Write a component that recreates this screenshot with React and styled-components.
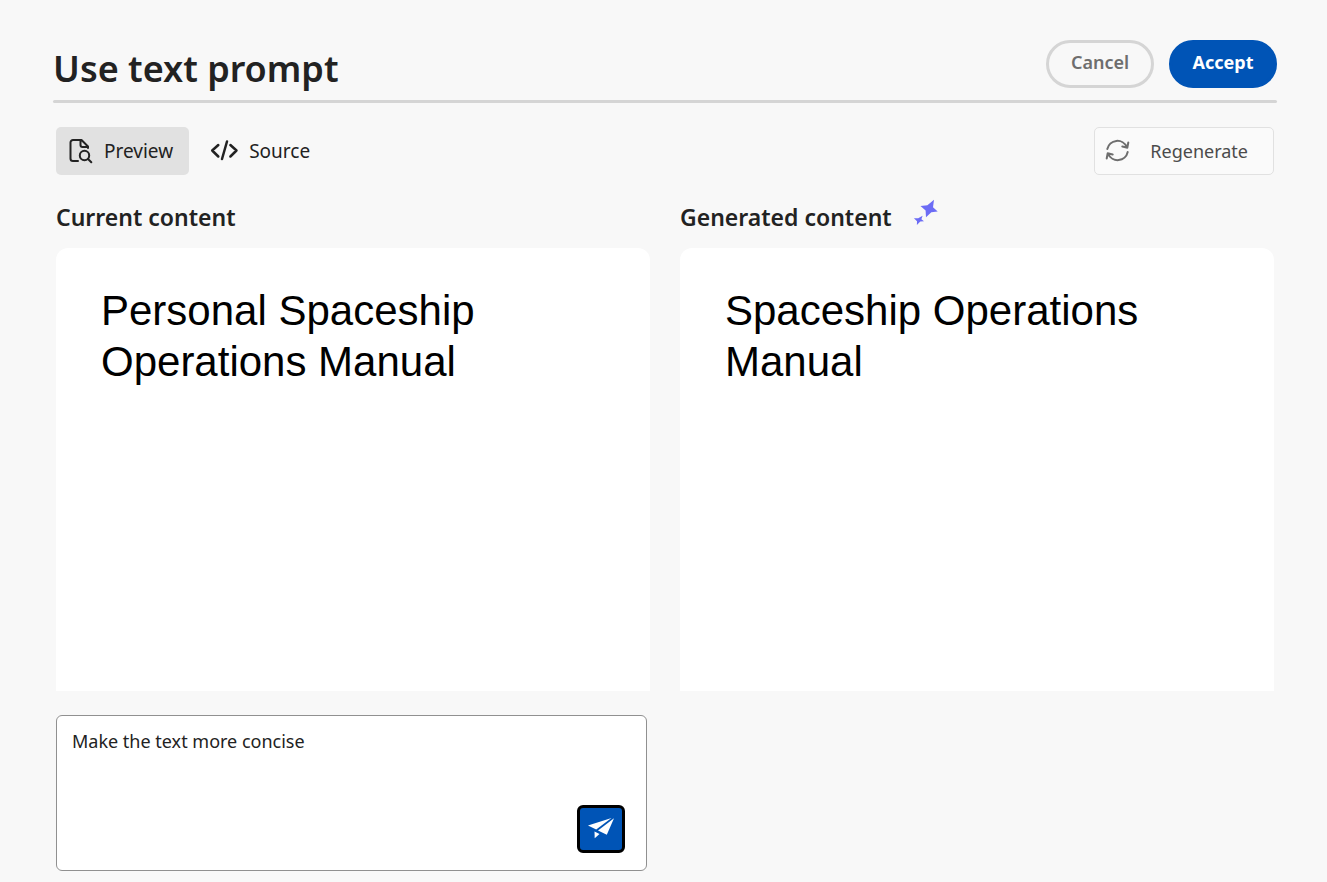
import React, { useState } from "react";
import styled, { createGlobalStyle } from "styled-components";

const GlobalStyle = createGlobalStyle`
  *, *::before, *::after { box-sizing: border-box; }
  body {
    margin: 0;
    background: #f8f8f8;
    color: #222;
    font-family: "Noto Sans", "Open Sans", sans-serif;
  }
  button, textarea { font-family: inherit; }
`;

const Page = styled.main`
  padding: 40px 50px 11px 53px;
`;

const Header = styled.header`
  display: flex;
  justify-content: space-between;
  align-items: flex-start;
  height: 63px;
`;

const Rule = styled.hr`
  height: 3px;
  margin: -3px 0 0;
  border: 0;
  border-radius: 2px;
  background: #d5d5d5;
`;

const Title = styled.h1`
  margin: 0;
  font-size: 36px;
  line-height: 58px;
  font-weight: 600;
`;

const Actions = styled.div`
  display: flex;
  gap: 15px;
`;

const PillButton = styled.button`
  width: 108px;
  height: 48px;
  padding: 0 0 4px;
  border: 3px solid ${(p) => (p.$primary ? "#0054b6" : "#d5d5d5")};
  border-radius: 24px;
  background: ${(p) => (p.$primary ? "#0054b6" : "transparent")};
  color: ${(p) => (p.$primary ? "#fff" : "#6e6e6e")};
  font-size: 18px;
  line-height: 24px;
  font-weight: ${(p) => (p.$primary ? 700 : 600)};
`;

const Body = styled.div`
  padding: 24px 3px 0;
`;

const Toolbar = styled.div`
  display: flex;
  justify-content: space-between;
`;

const ViewSwitch = styled.div`
  display: flex;
  gap: 8px;
`;

const ToolButton = styled.button`
  display: flex;
  align-items: center;
  gap: 10px;
  height: 48px;
  padding: 0 16px 0 12px;
  border: 0;
  border-radius: 5px;
  background: ${(p) => (p.$active ? "#e1e1e1" : "transparent")};
  color: #222;
  font-size: 19px;
  line-height: 24px;
  svg { flex: none; }
`;

const OutlineToolButton = styled(ToolButton)`
  gap: 19px;
  padding: 0 25px 0 8px;
  border: 1px solid #e1e1e1;
  background: #fafafa;
  color: #4b4b4b;
  font-size: 18px;
`;

const Columns = styled.div`
  display: grid;
  grid-template-columns: 1fr 1fr;
  gap: 30px;
  margin-top: 24px;
`;

const Heading = styled.h2`
  display: flex;
  gap: 20px;
  margin: 0 0 13px;
  font-size: 23px;
  line-height: 36px;
  font-weight: 600;
`;

const Card = styled.div`
  min-height: 443px;
  padding: 37px 45px;
  border-radius: 12px 12px 0 0;
  background: #fff;
  color: #000;
  font-family: "Liberation Sans", Arial, sans-serif;
  font-size: 42px;
  line-height: 51px;
`;

const PromptBox = styled.form`
  display: flex;
  flex-direction: column;
  width: calc(50% - 18px);
  margin-top: 24px;
  padding: 11px 21px 17px 15px;
  border: 1px solid #909090;
  border-radius: 6px;
  background: #fff;
`;

const PromptInput = styled.textarea`
  display: block;
  width: 100%;
  height: 78px;
  padding: 0;
  border: 0;
  outline: 0;
  resize: none;
  background: transparent;
  color: #222;
  font-size: 18px;
  line-height: 28px;
`;

const SendButton = styled.button`
  display: flex;
  align-items: center;
  justify-content: center;
  align-self: flex-end;
  width: 48px;
  height: 48px;
  padding: 0;
  border: 3px solid #000;
  border-radius: 6px;
  background: #0054b6;
`;

const PreviewIcon = () => (
  <svg width="26" height="28" viewBox="0 0 26 28" fill="none" stroke="currentColor" strokeWidth="2" strokeLinecap="round" strokeLinejoin="round" aria-hidden="true">
    <path d="M10 24H5a2.500 2.500 0 0 1-2.500-2.500v-16A2.500 2.500 0 0 1 5 3h8.500L20 9.500V11M12.500 3.500V8a2 2 0 0 0 2 2H20" />
    <circle cx="16.500" cy="18.500" r="4.700" />
    <path d="M20 22l3.300 3.300" />
  </svg>
);

const SourceIcon = () => (
  <svg width="30" height="24" viewBox="0 0 30 24" fill="none" stroke="currentColor" strokeWidth="2.500" strokeLinecap="round" strokeLinejoin="round" aria-hidden="true">
    <path d="M9.300 6L3.200 11.500l6.100 6M21.400 6l6.100 5.500-6.100 6M18 2.500L13 20" />
  </svg>
);

const RefreshIcon = () => (
  <svg width="28" height="28" viewBox="0 0 28 28" fill="none" stroke="#6e6e6e" strokeWidth="2" strokeLinecap="round" strokeLinejoin="round" aria-hidden="true">
    <path d="M4.300 12A10.300 10.300 0 0 1 23.800 10M25.300 5.500L24.300 10.700L19.300 9.500" />
    <path d="M24.700 15A10.300 10.300 0 0 1 5.200 17M3.700 21.500L4.700 16.300L9.700 17.500" />
  </svg>
);

const SparkleIcon = () => (
  <svg width="26" height="28" viewBox="0 0 26 28" fill="#6c6cf5" aria-hidden="true">
    <path d="M22 0.800L21 8.300L25.700 12.600L19.300 13.200L14 18.300L13.600 11.500L8.500 7L15.400 6.300Z" />
    <path d="M10.600 16.700L9.400 20.200L12 22.200L8.300 22.600L4.900 26L5 22.300L1.900 19.300L6.200 19.300Z" />
  </svg>
);

const SendIcon = () => (
  <svg width="28" height="28" viewBox="0 0 28 28" fill="#fff" aria-hidden="true">
    <path d="M1 10.500L24.500 3L9.200 14.600Z" />
    <path d="M27 3.200L11 15.600L19.800 19.700Z" />
    <path d="M7.500 16.400L12.500 18.900L7.700 23.300Z" />
  </svg>
);

export default function App() {
  const [view, setView] = useState("preview");
  const [prompt, setPrompt] = useState("Make the text more concise");

  return (
    <>
      <GlobalStyle />
      <Page>
        <Header>
          <Title>Use text prompt</Title>
          <Actions>
            <PillButton type="button">Cancel</PillButton>
            <PillButton type="button" $primary>Accept</PillButton>
          </Actions>
        </Header>
        <Rule />
        <Body>
          <Toolbar>
            <ViewSwitch>
              <ToolButton type="button" $active={view === "preview"} aria-pressed={view === "preview"} onClick={() => setView("preview")}>
                <PreviewIcon />
                Preview
              </ToolButton>
              <ToolButton type="button" $active={view === "source"} aria-pressed={view === "source"} onClick={() => setView("source")}>
                <SourceIcon />
                Source
              </ToolButton>
            </ViewSwitch>
            <OutlineToolButton type="button">
              <RefreshIcon />
              Regenerate
            </OutlineToolButton>
          </Toolbar>
          <Columns>
            <section>
              <Heading>Current content</Heading>
              <Card>Personal Spaceship Operations Manual</Card>
            </section>
            <section>
              <Heading>
                Generated content
                <SparkleIcon />
              </Heading>
              <Card>Spaceship Operations Manual</Card>
            </section>
          </Columns>
          <PromptBox onSubmit={(e) => e.preventDefault()}>
            <PromptInput aria-label="Prompt" value={prompt} onChange={(e) => setPrompt(e.target.value)} />
            <SendButton type="submit" aria-label="Send prompt">
              <SendIcon />
            </SendButton>
          </PromptBox>
        </Body>
      </Page>
    </>
  );
}
